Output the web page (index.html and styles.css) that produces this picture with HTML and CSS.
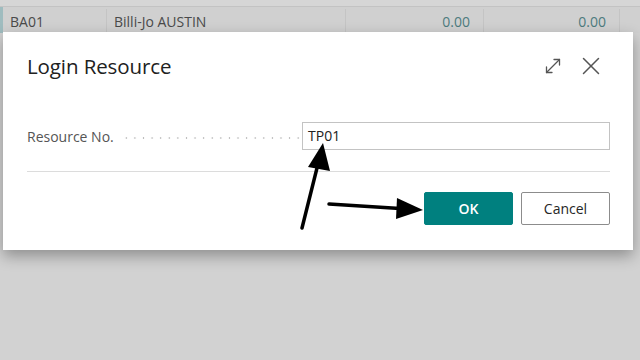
FILE: index.html
```html
<!DOCTYPE html>
<html>
<head>
<meta charset="utf-8">
<link rel="stylesheet" href="styles.css">
</head>
<body>
<div class="page">
  <div class="list-top"></div>
  <div class="list-row">
    <div class="cell cell-no">BA01</div>
    <div class="cell cell-name">Billi-Jo AUSTIN</div>
    <div class="cell cell-num">0.00</div>
    <div class="cell cell-num cell-num2">0.00</div>
    <div class="cell cell-rest"></div>
  </div>
</div>

<div class="dialog">
  <div class="dlg-header">
    <div class="dlg-title">Login Resource</div>
    <div class="dlg-actions">
      <button class="icon-btn" aria-label="Expand">
        <svg width="18" height="18" viewBox="0 0 18 18" fill="none" stroke="#555" stroke-width="1.3" stroke-linecap="round" stroke-linejoin="round">
          <path d="M2.5 15.5 L15.5 2.5"/>
          <path d="M10 2.5 H15.5 V8"/>
          <path d="M2.5 10 V15.5 H8"/>
        </svg>
      </button>
      <button class="icon-btn" aria-label="Close">
        <svg width="18" height="18" viewBox="0 0 18 18" fill="none" stroke="#555" stroke-width="1.5" stroke-linecap="round">
          <path d="M1.5 1.5 L16.5 16.5"/>
          <path d="M16.5 1.5 L1.5 16.5"/>
        </svg>
      </button>
    </div>
  </div>
  <div class="field-row">
    <div class="field-label"><span>Resource No.</span><span class="leader"></span></div>
    <div class="field-input">TP01</div>
  </div>
  <div class="divider"></div>
  <div class="dlg-footer">
    <button class="btn btn-primary">OK</button>
    <button class="btn btn-secondary">Cancel</button>
  </div>
</div>

<svg class="annotations" width="640" height="360" viewBox="0 0 640 360">
  <line x1="302" y1="228" x2="318" y2="164" stroke="#000" stroke-width="3.5" stroke-linecap="round"/>
  <polygon points="323,143 308,167 330,171" fill="#000"/>
  <line x1="329" y1="204" x2="400" y2="208.5" stroke="#000" stroke-width="3.5" stroke-linecap="round"/>
  <polygon points="423,210 397,198 396,219" fill="#000"/>
</svg>
</body>
</html>
```

FILE: styles.css
```css
* { box-sizing: border-box; }
html, body {
  margin: 0;
  padding: 0;
}
body {
  width: 640px;
  height: 360px;
  overflow: hidden;
  background: #d2d2d2;
  font-family: "Open Sans", "Noto Sans", sans-serif;
  position: relative;
}
.page {
  display: flex;
  flex-direction: column;
}
.list-top {
  height: 7px;
  background: #d6d6d6;
  border-bottom: 1px solid #c3c3c3;
}
.list-row {
  display: flex;
  height: 26px;
  background: #d0d0d0;
  border-left: 3px solid #9fbcbf;
  color: #4a4a4a;
  font-size: 14px;
  line-height: 26px;
  padding-top: 2px;
}
.cell {
  padding: 0 7px;
  border-right: 1px solid #c4c4c4;
  white-space: nowrap;
}
.cell-no { width: 104px; }
.cell-name { width: 239px; }
.cell-num { width: 138px; text-align: right; color: #4d7b7e; padding-right: 13px; }
.cell-num2 { width: 136px; }
.cell-rest { flex: 1; border-right: none; }

.dialog {
  position: absolute;
  left: 3px;
  top: 32px;
  width: 630px;
  height: 218px;
  background: #fff;
  box-shadow: 0 6px 14px rgba(0,0,0,0.32);
  padding: 20px 23px 25px 24px;
  display: flex;
  flex-direction: column;
}
.dlg-header {
  display: flex;
  align-items: center;
  justify-content: space-between;
  height: 28px;
}
.dlg-title {
  font-size: 20.5px;
  line-height: 28px;
  color: #212121;
  letter-spacing: -0.1px;
}
.dlg-actions {
  display: flex;
  gap: 6px;
  margin-right: 3px;
}
.icon-btn {
  width: 32px;
  height: 28px;
  padding: 0;
  border: none;
  background: transparent;
  display: flex;
  align-items: center;
  justify-content: center;
}
.field-row {
  margin-top: 42px;
  display: flex;
  align-items: center;
  height: 28px;
}
.field-label {
  width: 275px;
  display: flex;
  align-items: center;
  font-size: 14px;
  color: #555;
}
.leader {
  flex: 1;
  height: 2px;
  margin: 4px 0 0 8px;
  background-image: radial-gradient(circle, #bdbdbd 0.8px, transparent 1.1px);
  background-size: 8.6px 2px;
  background-repeat: repeat-x;
}
.field-input {
  flex: 1;
  height: 28px;
  border: 1px solid #c3c3c3;
  padding: 0 5px;
  font-size: 14px;
  line-height: 26px;
  color: #212121;
}
.divider {
  margin-top: 21px;
  height: 1px;
  background: #dcdcdc;
}
.dlg-footer {
  margin-top: 20px;
  display: flex;
  justify-content: flex-end;
  gap: 8px;
}
.btn {
  height: 33px;
  width: 89px;
  font-family: "Open Sans", "Noto Sans", sans-serif;
  font-size: 14px;
  border-radius: 2px;
  padding: 0;
}
.btn-primary {
  background: #00807f;
  border: 1px solid #00807f;
  color: #fff;
  font-weight: 600;
}
.btn-secondary {
  background: #fff;
  border: 1px solid #8c8c8c;
  color: #262626;
}
.annotations {
  position: absolute;
  left: 0;
  top: 0;
  pointer-events: none;
}
```
